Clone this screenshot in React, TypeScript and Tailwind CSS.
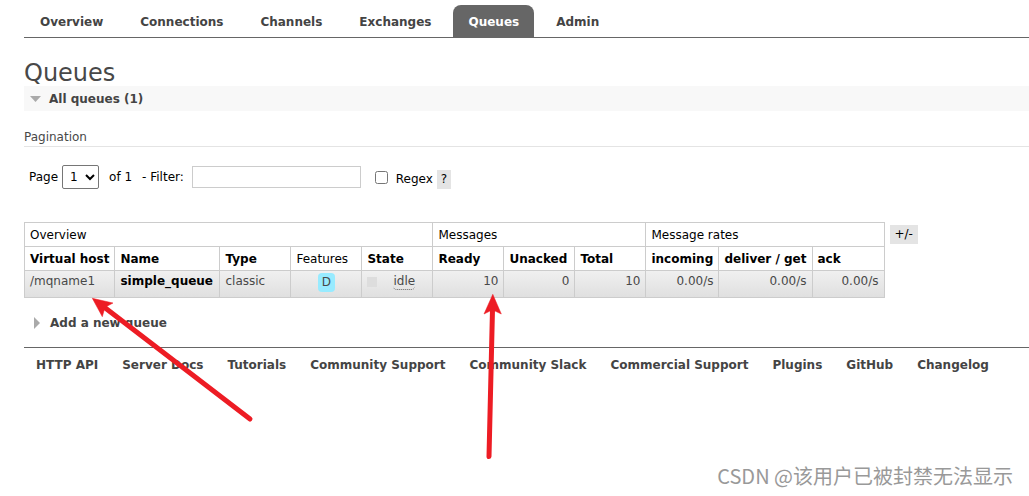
import { useState } from "react";

const tabs = ["Overview", "Connections", "Channels", "Exchanges", "Queues", "Admin"];

const footerLinks = [
  "HTTP API",
  "Server Docs",
  "Tutorials",
  "Community Support",
  "Community Slack",
  "Commercial Support",
  "Plugins",
  "GitHub",
  "Changelog",
];

const groups = [
  { label: "Overview", span: 5 },
  { label: "Messages", span: 3 },
  { label: "Message rates", span: 3 },
];

const columns = [
  { label: "Virtual host", sortable: true, width: "min-w-[90px]" },
  { label: "Name", sortable: true, width: "min-w-[105px]" },
  { label: "Type", sortable: true, width: "min-w-[71px]" },
  { label: "Features", sortable: false, width: "min-w-[71px]" },
  { label: "State", sortable: true, width: "min-w-[71px]" },
  { label: "Ready", sortable: true, width: "min-w-[71px]" },
  { label: "Unacked", sortable: true, width: "min-w-[71px]" },
  { label: "Total", sortable: true, width: "min-w-[71px]" },
  { label: "incoming", sortable: true, width: "min-w-[73px]" },
  { label: "deliver / get", sortable: true, width: "min-w-[93px]" },
  { label: "ack", sortable: true, width: "min-w-[72px]" },
];

const queues = [
  {
    vhost: "/mqname1",
    name: "simple_queue",
    type: "classic",
    state: "idle",
    messages: ["10", "0", "10"],
    rates: ["0.00/s", "0.00/s", "0.00/s"],
  },
];

function Tabs() {
  const [active, setActive] = useState("Queues");

  return (
    <nav className="flex gap-[7px] border-b border-[#666] pt-[5px] pl-px">
      {tabs.map((tab) => (
        <a
          key={tab}
          href="#"
          onClick={() => setActive(tab)}
          className={
            tab === active
              ? "rounded-t-lg bg-[#666] px-[15px] pt-[9px] pb-[7px] font-bold text-white"
              : "rounded-t-lg px-[15px] pt-[9px] pb-[7px] font-bold text-[#444]"
          }
        >
          {tab}
        </a>
      ))}
    </nav>
  );
}

function QueueTable() {
  return (
    <table className="border-collapse whitespace-nowrap">
      <thead className="text-left text-black">
        <tr className="h-6">
          {groups.map((group) => (
            <th
              key={group.label}
              colSpan={group.span}
              className="border border-[#ccc] px-[5px] font-normal"
            >
              {group.label}
            </th>
          ))}
        </tr>
        <tr className="h-6">
          {columns.map((column) => (
            <th key={column.label} className={`border border-[#ccc] px-[5px] ${column.width}`}>
              {column.sortable ? (
                <a href="#">{column.label}</a>
              ) : (
                <span className="font-normal">{column.label}</span>
              )}
            </th>
          ))}
        </tr>
      </thead>
      <tbody>
        {queues.map((queue) => (
          <tr
            key={queue.name}
            className="h-[27px] bg-linear-to-b from-[#f0f0f0] to-[#dfdfdf] align-top"
          >
            <td className="border border-[#ccc] px-[5px] py-0.5">{queue.vhost}</td>
            <td className="border border-[#ccc] px-[5px] py-0.5">
              <a href="#" className="font-bold text-black">
                {queue.name}
              </a>
            </td>
            <td className="border border-[#ccc] px-[5px] py-0.5">{queue.type}</td>
            <td className="border border-[#ccc] px-[5px] py-0.5">
              <div className="flex justify-center">
                <abbr
                  title="durable: true"
                  className="rounded bg-[#98ebff] px-1 leading-[19px] no-underline"
                >
                  D
                </abbr>
              </div>
            </td>
            <td className="border border-[#ccc] px-[5px] py-0.5">
              <div className="flex items-center gap-4">
                <span className="size-2.5 bg-[#ddd]" />
                <span className="rounded-sm border-b border-dotted border-[#666] leading-4">
                  {queue.state}
                </span>
              </div>
            </td>
            {[...queue.messages, ...queue.rates].map((value, index) => (
              <td key={index} className="border border-[#ccc] px-[5px] py-0.5 text-right">
                {value}
              </td>
            ))}
          </tr>
        ))}
      </tbody>
    </table>
  );
}

function Arrows() {
  return (
    <svg
      className="pointer-events-none absolute top-0 left-0"
      width="520"
      height="470"
      fill="#ed1c24"
      stroke="#ed1c24"
      aria-hidden="true"
    >
      <path d="M250 419L104 307" strokeWidth="5" strokeLinecap="round" />
      <path d="M92.3 298.3L113 303L106.5 306.5L104.5 309L102.3 316.7Z" strokeWidth="0.5" />
      <path d="M489 456.5L492.5 309" strokeWidth="5" strokeLinecap="round" />
      <path d="M492.8 294.3L501.3 314L495 311H490L484 314Z" strokeWidth="0.5" />
    </svg>
  );
}

export default function App() {
  return (
    <div className="relative min-h-screen bg-white pl-6 font-['DejaVu_Sans',sans-serif] text-xs text-[#484848]">
      <Tabs />
      <main>
        <h1 className="pt-[22px] text-2xl leading-[26px]">Queues</h1>
        <h2 className="bg-[#f8f8f8]">
          <button className="flex items-center gap-2 px-1.5 pt-1 pb-1 leading-[17px] font-bold text-[#444]">
            <svg width="11" height="6" fill="#aaa" aria-hidden="true">
              <path d="M0 0H11L5.5 6Z" />
            </svg>
            <span className="pt-px leading-4">All queues (1)</span>
          </button>
        </h2>

        <h3 className="mt-[18px] border-b border-[#e4e4e4] pb-px">Pagination</h3>

        <div className="mt-[18px] flex items-center pl-[5px] text-black">
          <label htmlFor="page">Page</label>
          <select
            id="page"
            className="ml-1 h-6 w-[37px] rounded-xs border border-[#767676] pl-[3px]"
          >
            <option>1</option>
          </select>
          <span className="ml-2.5">of 1</span>
          <label htmlFor="filter" className="ml-2.5">
            - Filter:
          </label>
          <input
            id="filter"
            type="text"
            className="ml-2 h-[22px] w-[169px] border border-[#ccc] px-1"
          />
          <input id="regex" type="checkbox" className="ml-3.5 size-[13px]" />
          <label htmlFor="regex" className="ml-2 pt-1">
            Regex
          </label>
          <button className="mt-1 ml-1 bg-[#e4e4e4] px-1 leading-[19px]">?</button>
        </div>

        <div className="mt-[33px] flex items-start gap-[5px]">
          <QueueTable />
          <button className="mt-[3px] bg-[#e4e4e4] px-[5px] leading-[19px] text-black">+/-</button>
        </div>

        <button className="mt-4 flex items-center gap-2.5 px-2.5 leading-[17px] font-bold text-[#444]">
          <svg width="6" height="12" fill="#aaa" aria-hidden="true">
            <path d="M0 0V12L6 6Z" />
          </svg>
          <span className="pt-px">Add a new queue</span>
        </button>
      </main>

      <footer className="mt-[15px] flex flex-wrap gap-6 border-t border-[#666] px-3 py-[9px] whitespace-nowrap">
        {footerLinks.map((link) => (
          <a key={link} href="#" className="font-bold text-[#444]">
            {link}
          </a>
        ))}
      </footer>

      <Arrows />
      <p className="absolute right-4 bottom-1.5 font-['Noto_Sans_CJK_SC',sans-serif] text-xl leading-7 text-[#999]">
        CSDN @该用户已被封禁无法显示
      </p>
    </div>
  );
}
